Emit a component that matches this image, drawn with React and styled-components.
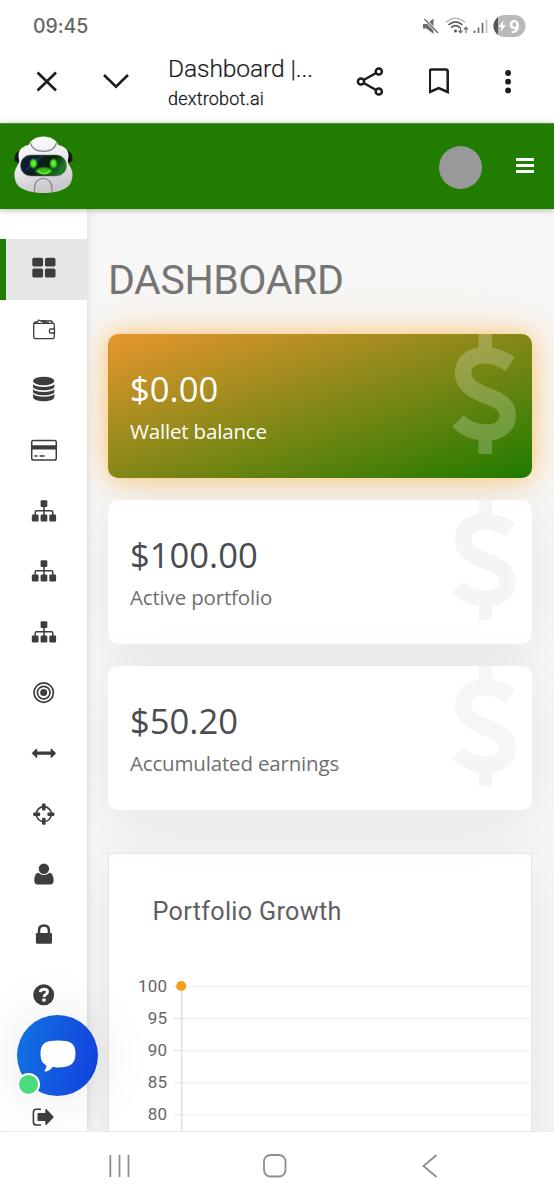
import React from 'react';
import styled, { createGlobalStyle, css } from 'styled-components';

const GlobalStyle = createGlobalStyle`
  * {
    box-sizing: border-box;
  }

  body {
    margin: 0;
    background: #fff;
    font-family: Roboto, sans-serif;
  }

  svg {
    display: block;
    flex-shrink: 0;
  }
`;

const Phone = styled.div`
  width: 554px;
  height: 1200px;
  display: flex;
  flex-direction: column;
  overflow: hidden;
  background: #fff;
`;

const StatusBar = styled.div`
  height: 52px;
  display: flex;
  align-items: center;
  justify-content: space-between;
  padding: 0 28px 0 33px;
`;

const Clock = styled.span`
  font: 500 19.5px Inter, sans-serif;
  letter-spacing: -0.1px;
  color: #666;
`;

const BrowserBar = styled.div`
  height: 71px;
  display: flex;
  align-items: center;
  padding: 0 42px 11px 30px;
`;

const PageInfo = styled.div`
  width: 187px;
  margin-left: 36px;
  padding-top: 1px;
  color: #1b1c1f;
`;

const PageTitle = styled.div`
  font-size: 24.6px;
  line-height: 32px;
  letter-spacing: -0.12px;
  font-weight: 300;
  -webkit-text-stroke: 0.2px #1b1c1f;
  white-space: nowrap;
`;

const PageUrl = styled.div`
  font-size: 18px;
  line-height: 28px;
  letter-spacing: 0.2px;
  font-weight: 300;
  -webkit-text-stroke: 0.3px #1b1c1f;
`;

const BrowserActions = styled.div`
  flex: 1;
  display: flex;
  align-items: center;
  justify-content: space-between;
`;

const Header = styled.header`
  height: 86px;
  flex-shrink: 0;
  display: flex;
  align-items: center;
  padding: 0 20px 0 12px;
  background: #217c02;
  border-top: 1px solid #4d9337;
  box-shadow: 0 1px 6px rgba(0, 0, 0, 0.3);
  position: relative;
  z-index: 3;
`;

const Avatar = styled.div`
  width: 43px;
  height: 43px;
  margin: 1px 34px 0 auto;
  border-radius: 50%;
  background: #999;
`;

const MenuButton = styled.div`
  width: 18px;
  margin: 0 0 2px;
  display: grid;
  gap: 3px;

  span {
    height: 3px;
    background: #fff;
  }
`;

const Body = styled.div`
  flex: 1;
  min-height: 0;
  display: flex;
  overflow: hidden;
  position: relative;
  background: #f7f7f7;
`;

const Sidebar = styled.nav`
  width: 87px;
  flex-shrink: 0;
  padding-top: 30px;
  background: #fff;
  box-shadow: 0 0 8px rgba(0, 0, 0, 0.13);
  position: relative;
  z-index: 2;
`;

const NavItem = styled.div`
  height: 60.6px;
  display: flex;
  align-items: center;
  padding-left: 28px;
  color: #3d3d3d;

  ${props => props.$active && css`
    padding-left: 22px;
    border-left: 6px solid #217c02;
    background: #e7e7e7;
  `}
`;

const Content = styled.main`
  flex: 1;
  min-width: 0;
  padding: 46px 22px 0 21px;
`;

const Heading = styled.h1`
  margin: 0 0 29px;
  font-size: 41px;
  line-height: 50px;
  font-weight: 400;
  letter-spacing: -0.4px;
  color: #757575;
`;

const Cards = styled.div`
  display: grid;
  gap: 22px;
`;

const Card = styled.section`
  height: 144px;
  display: flex;
  justify-content: space-between;
  padding-left: 22px;
  padding-right: 14px;
  border-radius: 10px;
  overflow: hidden;
  font-family: 'Open Sans', sans-serif;
  color: ${props => (props.$highlight ? '#fff' : '#4a4c50')};
  background: ${props => (props.$highlight ? 'linear-gradient(to bottom right, #e8962e, #207b00)' : '#fff')};
  box-shadow: ${props => (props.$highlight
    ? '0 0 22px rgba(255, 165, 30, 0.55), 0 0 60px rgba(255, 165, 40, 0.22)'
    : '0 10px 60px rgba(0, 0, 0, 0.075)')};
`;

const CardText = styled.div`
  padding-top: 31px;
`;

const Amount = styled.div`
  font-size: 34.6px;
  line-height: 48px;
`;

const Label = styled.div`
  font-size: 20.5px;
  line-height: 28px;
  margin-top: 4px;
  letter-spacing: -0.17px;
  color: ${props => (props.$highlight ? '#fff' : '#6f6f6f')};
`;

const ChartCard = styled.section`
  margin-top: 43px;
  height: 400px;
  padding-top: 40px;
  background: #fff;
  border: 1px solid #e6e6e6;
  box-shadow: 0 10px 60px rgba(0, 0, 0, 0.075);
`;

const ChartTitle = styled.h2`
  margin: 0 0 0 43.5px;
  font-size: 25.2px;
  line-height: 36px;
  font-weight: 400;
  letter-spacing: 0.3px;
  color: #5f6062;
`;

const ChatButton = styled.button`
  position: absolute;
  left: 17px;
  bottom: 35px;
  z-index: 4;
  width: 81px;
  height: 81px;
  padding: 0;
  border: 0;
  border-radius: 50%;
  display: grid;
  place-items: center;
  background: linear-gradient(100deg, #1273e2, #1340dd);
  box-shadow: 0 2px 60px rgba(0, 0, 0, 0.1);
`;

const OnlineDot = styled.span`
  position: absolute;
  left: 0;
  bottom: 0;
  width: 23px;
  height: 23px;
  border: 2.5px solid #fff;
  border-radius: 50%;
  background: #4bdc7d;
`;

const SystemNav = styled.footer`
  height: 69px;
  flex-shrink: 0;
  display: flex;
  align-items: center;
  justify-content: space-between;
  padding: 0 115px 0 107px;
  background: #fff;
  border-top: 1px solid #ececec;
`;

const NavIcon = ({ children }) => (
  <svg width="32" height="32" viewBox="0 0 32 32" fill="currentColor">{children}</svg>
);

const GridIcon = () => (
  <NavIcon>
    <rect x="4.3" y="4.8" width="10.8" height="8.6" rx="1.6" />
    <rect x="17" y="4.8" width="10.5" height="8.6" rx="1.6" />
    <rect x="4.3" y="15.6" width="10.8" height="9" rx="1.6" />
    <rect x="17" y="15.6" width="10.5" height="9" rx="1.6" />
  </NavIcon>
);

const WalletIcon = () => (
  <NavIcon>
    <g fill="none" stroke="currentColor" strokeWidth="1.3" strokeLinejoin="round">
      <path d="M26.300 15V10.500q0-1.200-1.200-1.200H7q-1.300 0-1.300 1.500V22.500q0 2.200 2.200 2.200H24.300q2 0 2-2V19" />
      <path d="M26.500 15h-4q-1 0-1 1v2q0 1 1 1h4z" />
      <path d="M5.800 10q.2-2.200 3-2.400M9 9l1.500-3 7 2.800M12.500 6.600l11 .4 1.500 2M16 7.500l5 1.500" />
    </g>
  </NavIcon>
);

const DatabaseIcon = () => (
  <NavIcon>
    <ellipse cx="15.700" cy="7" rx="10.700" ry="4.200" />
    <path d="M5 10.300q3 2.700 10.700 2.700t10.700-2.700v2.200c0 5-21.400 5-21.400 0z" />
    <path d="M5 15.200q3 2.700 10.700 2.700t10.700-2.700v2.200c0 5-21.400 5-21.400 0z" />
    <path d="M5 20.100q3 2.700 10.700 2.700t10.700-2.700v2.700c0 6-21.400 6-21.400 0z" />
  </NavIcon>
);

const CreditCardIcon = () => (
  <NavIcon>
    <rect x="3.700" y="5.500" width="24.600" height="19.500" rx="1.800" fill="none" stroke="currentColor" strokeWidth="1.500" />
    <path d="M3.500 10.300h25v4.300h-25zM6.300 20.300h3.200v1.500H6.300zM11.500 20.300h5.200v1.500h-5.200z" />
  </NavIcon>
);

const SitemapIcon = () => (
  <NavIcon>
    <rect x="12.600" y="4.200" width="6.700" height="6.800" rx="1.100" />
    <rect x="3.800" y="18.600" width="6.800" height="7" rx="1.100" />
    <rect x="12.600" y="18.600" width="6.700" height="7" rx="1.100" />
    <rect x="21.300" y="18.600" width="6.800" height="7" rx="1.100" />
    <path d="M7.200 19v-3q0-1.300 1.300-1.300h15q1.300 0 1.300 1.300v3M16 10.500V19" fill="none" stroke="currentColor" strokeWidth="1.500" />
  </NavIcon>
);

const TargetIcon = () => (
  <NavIcon>
    <circle cx="15.700" cy="15.600" r="3.500" />
    <circle cx="15.700" cy="15.600" r="6.300" fill="none" stroke="currentColor" strokeWidth="1.700" />
    <circle cx="15.700" cy="15.600" r="9.700" fill="none" stroke="currentColor" strokeWidth="1.700" />
  </NavIcon>
);

const ArrowsIcon = () => (
  <NavIcon>
    <path d="M3.700 15.200 8.200 10.700q.9-.3 1 .8v2.100h13.400v-2.100q.1-1.100 1-.8l4.500 4.500-4.500 4.500q-.9.300-1-.8v-2.100H9.200v2.100q-.1 1.100-1 .8z" />
  </NavIcon>
);

const CrosshairIcon = () => (
  <NavIcon>
    <circle cx="15.800" cy="15.200" r="7.500" fill="none" stroke="currentColor" strokeWidth="1.700" />
    <rect x="14" y="4.500" width="3.600" height="7" rx="1" />
    <rect x="14" y="18.800" width="3.600" height="7" rx="1" />
    <rect x="5.200" y="13.400" width="7" height="3.600" rx="1" />
    <rect x="19.400" y="13.400" width="7" height="3.600" rx="1" />
  </NavIcon>
);

const UserIcon = () => (
  <NavIcon>
    <circle cx="15.900" cy="9.700" r="5.200" />
    <path d="M10.500 13.800c3 3 7.800 3 10.800 0 3 .5 4.300 3.700 4.300 7.800q0 4-3.300 4H9.600q-3.300 0-3.300-4c0-4.100 1.200-7.300 4.200-7.800z" />
  </NavIcon>
);

const LockIcon = () => (
  <NavIcon>
    <rect x="7.900" y="13" width="16.100" height="10.700" rx="1.200" />
    <path d="M11 14v-3.500q0-5 4.950-5t4.950 5V14" fill="none" stroke="currentColor" strokeWidth="2.500" />
  </NavIcon>
);

const HelpIcon = () => (
  <NavIcon>
    <circle cx="15.700" cy="14.800" r="10.500" />
    <path d="M12 12q1-2.700 3.900-2.700 3.600 0 3.600 2.700c0 2.400-3.400 2-3.400 5" fill="none" stroke="#fff" strokeWidth="2.900" />
    <rect x="14.300" y="18.500" width="3.300" height="3" fill="#fff" />
  </NavIcon>
);

const SignOutIcon = () => (
  <NavIcon>
    <path d="M13 7.200H8.500q-3.100 0-3.100 3.100v9.600q0 3.100 3.100 3.100H13" fill="none" stroke="currentColor" strokeWidth="1.600" />
    <path d="M10.300 11h7V7.800q.2-1.300 1.300-.5l7.300 7.700-7.300 7.800q-1.100.8-1.300-.5V19h-7q-.8 0-.8-.8v-6.400q0-.8.800-.8z" />
  </NavIcon>
);

const RobotLogo = () => (
  <svg width="64" height="66" viewBox="0 0 64 66">
    <defs>
      <linearGradient id="shell" x1="0" y1="0" x2="0.300" y2="1">
        <stop offset="0" stopColor="#fff" />
        <stop offset="0.600" stopColor="#e9e9ec" />
        <stop offset="1" stopColor="#c9c9cd" />
      </linearGradient>
      <linearGradient id="visor" x1="0" y1="0" x2="1" y2="0.300">
        <stop offset="0" stopColor="#0a2a12" />
        <stop offset="0.250" stopColor="#101b38" />
        <stop offset="0.700" stopColor="#07210a" />
        <stop offset="1" stopColor="#1c7a20" />
      </linearGradient>
      <radialGradient id="glow">
        <stop offset="0" stopColor="#6cff3d" />
        <stop offset="0.550" stopColor="#45d820" />
        <stop offset="1" stopColor="#1b7a12" stopOpacity="0" />
      </radialGradient>
    </defs>
    <path d="M2.500 27q-.5-9 6-11v14zM60.500 27q.5-9-6-11v14z" fill="#15151a" />
    <path d="M31.500 2.500C39 2.500 44 6 46.500 11c5.500 1 9.500 4.500 10 9.500.3 3-1 5.500-.5 8 1.500 3.500 4 6 4.500 11 .3 8-3 12.500-7 14.800-5 3.200-14 4.700-22 4.700S14.500 57.500 9.500 54.300c-4-2.300-7.300-6.800-7-14.800.5-5 3-7.500 4.500-11 .5-2.500-.8-5-.5-8 .5-5 4.500-8.500 10-9.500 2.500-5 7.500-8.500 15-8.500z" fill="url(#shell)" />
    <path d="M18.500 9C20 15 25 17.300 31.500 17.300S43 15 44.500 9M22.500 58.500v-4c0-13.500 17.500-13.500 17.500 0v4" fill="none" stroke="#86868b" strokeWidth="1.200" />
    <rect x="8.500" y="21" width="46" height="21" rx="10" fill="url(#visor)" stroke="#777" strokeWidth="0.600" />
    <path d="M14 36 30 22M42 41 51 28" stroke="#245068" strokeWidth="2" opacity="0.500" />
    <ellipse cx="32" cy="37" rx="11" ry="5" fill="url(#glow)" opacity="0.700" />
    <ellipse cx="21.500" cy="29.500" rx="4.700" ry="6" fill="url(#glow)" />
    <ellipse cx="41.500" cy="29.500" rx="4.700" ry="6" fill="url(#glow)" />
    <path d="M25.500 36.500q6.500 6 13 0" fill="none" stroke="#54e52c" strokeWidth="1.800" />
  </svg>
);

const DollarMark = ({ highlight }) => (
  <svg width="73" height="121" viewBox="0 0 73 121">
    <g opacity={highlight ? 0.22 : 0.035} fill={highlight ? '#fff' : '#000'} stroke="none">
      <path
        d="M65.300 30C57 24.500 49 21.200 40 21.200C27 21.200 18 28.500 18 39C18 50 27 56 40 61C54 66 62.700 71 62.700 81.500C62.700 92 54 98.500 41 98.500C29 98.500 20 94 13 87"
        fill="none"
        stroke={highlight ? '#fff' : '#000'}
        strokeWidth="16.500"
      />
      <rect x="33.500" y="-4" width="13.500" height="20" />
      <rect x="33.500" y="103" width="13.500" height="17" rx="1" />
    </g>
  </svg>
);

const StatusIcons = () => (
  <svg width="104" height="24" viewBox="422 14 104 24">
    <path d="M423 24h3.500l7-5.500V34l-7-5.500H423z" fill="#6d6d6d" />
    <path d="M424 18.500 438 33" stroke="#fff" strokeWidth="3" />
    <path d="M424.500 19 438 33" stroke="#6d6d6d" strokeWidth="1.400" />
    <g fill="none" strokeWidth="1.600">
      <path d="M446 22.500q9.500-8.500 19 0" stroke="#bbb" />
      <path d="M448.500 24.800q7-6 14 0M451 27.700q4.500-4 9 0" stroke="#606060" />
      <path d="M460.500 27v5.500m-2-2 2 2.300 2-2.300M466 33v-5.500m-2 2 2-2.300 2 2.300" stroke="#707070" strokeWidth="1.200" />
    </g>
    <circle cx="455.500" cy="31" r="1.500" fill="#555" />
    <path d="M474.500 33v-2.500M478.500 33v-5.500M482.500 33V23" stroke="#6c6c6c" strokeWidth="1.700" />
    <path d="M486.500 33V19.500" stroke="#c4c4c4" strokeWidth="1.700" />
    <clipPath id="battery"><rect x="493.500" y="15" width="32" height="22" rx="11" /></clipPath>
    <g clipPath="url(#battery)">
      <rect x="493" y="15" width="33" height="22" fill="#b9b9b9" />
      <rect x="493" y="15" width="5" height="22" fill="#555" />
    </g>
    <path d="M503.500 20 498.500 27h3l-1 5 5.500-7h-3.200z" fill="#fff" />
    <text x="509" y="32.700" fontFamily="Roboto, sans-serif" fontSize="18.500" fontWeight="700" fill="#fff">9</text>
  </svg>
);

const TabIcons = () => (
  <svg width="102" height="30" viewBox="30 67 102 30" fill="none" stroke="#1b1c1f" strokeWidth="2.600">
    <path d="M37.500 72.500 56 90.500M56 72.500 37.500 90.500M104 75l12 11.700L128 75" />
  </svg>
);

const ShareIcon = () => (
  <svg width="30" height="32" viewBox="355 66 30 32" fill="none" stroke="#1b1c1f" strokeWidth="2.500">
    <circle cx="361" cy="81.500" r="3.100" />
    <circle cx="378.800" cy="71.500" r="3.100" />
    <circle cx="378.800" cy="91.500" r="3.100" />
    <path d="m363.700 80 12.400-7M363.700 83l12.400 7" />
  </svg>
);

const BookmarkIcon = () => (
  <svg width="32" height="30" viewBox="429 67 32 30" fill="none" stroke="#1b1c1f" strokeWidth="2.500">
    <path d="M429.800 92V71.500q0-2 2-2h13.900q2 0 2 2V92l-9-4z" />
  </svg>
);

const MoreIcon = () => (
  <svg width="8" height="30" viewBox="503.500 67 8 30" fill="#1b1c1f">
    <circle cx="507.600" cy="73" r="2.900" />
    <circle cx="507.600" cy="81.700" r="2.900" />
    <circle cx="507.600" cy="90.400" r="2.900" />
  </svg>
);

const ticks = [100, 95, 90, 85, 80];

const GrowthChart = () => (
  <svg width="422" height="240" viewBox="109 930 422 240">
    {ticks.map((tick, i) => (
      <g key={tick}>
        <path d={`M181 ${986.5 + i * 32.1}H531`} stroke="#efefef" />
        <path d={`M174 ${986.5 + i * 32.1}H182`} stroke="#dedede" />
        <text x="167.300" y={991.5 + i * 32} textAnchor="end" fontSize="17" letterSpacing="0.250" fill="#666">{tick}</text>
      </g>
    ))}
    <path d="M181.800 986v184" stroke="#dcdcdc" strokeWidth="1.300" />
    <circle cx="181.200" cy="986" r="5.100" fill="#f0a11a" />
  </svg>
);

const menu = [
  GridIcon, WalletIcon, DatabaseIcon, CreditCardIcon, SitemapIcon, SitemapIcon, SitemapIcon,
  TargetIcon, ArrowsIcon, CrosshairIcon, UserIcon, LockIcon, HelpIcon, NavIcon, SignOutIcon,
];

const stats = [
  { amount: '$0.00', label: 'Wallet balance', highlight: true },
  { amount: '$100.00', label: 'Active portfolio' },
  { amount: '$50.20', label: 'Accumulated earnings' },
];

const StatCard = ({ amount, label, highlight }) => (
  <Card $highlight={highlight}>
    <CardText>
      <Amount>{amount}</Amount>
      <Label $highlight={highlight}>{label}</Label>
    </CardText>
    <DollarMark highlight={highlight} />
  </Card>
);

const App = () => {
  return (
    <Phone>
      <GlobalStyle />
      <StatusBar>
        <Clock>09:45</Clock>
        <StatusIcons />
      </StatusBar>
      <BrowserBar>
        <TabIcons />
        <PageInfo>
          <PageTitle>Dashboard |...</PageTitle>
          <PageUrl>dextrobot.ai</PageUrl>
        </PageInfo>
        <BrowserActions>
          <ShareIcon />
          <BookmarkIcon />
          <MoreIcon />
        </BrowserActions>
      </BrowserBar>
      <Header>
        <RobotLogo />
        <Avatar />
        <MenuButton><span /><span /><span /></MenuButton>
      </Header>
      <Body>
        <Sidebar>
          {menu.map((Icon, i) => (
            <NavItem key={i} $active={i === 0}><Icon /></NavItem>
          ))}
        </Sidebar>
        <Content>
          <Heading>DASHBOARD</Heading>
          <Cards>
            {stats.map(stat => <StatCard key={stat.label} {...stat} />)}
          </Cards>
          <ChartCard>
            <ChartTitle>Portfolio Growth</ChartTitle>
            <GrowthChart />
          </ChartCard>
        </Content>
        <ChatButton>
          <svg width="36" height="34" viewBox="0 0 36 34" fill="#fff">
            <path d="M18 1.500C30 1.500 35.500 4 35.500 14.500S30 28.500 18 28.500c-2 0-4 0-5.500-.4-1.500 2.400-4 4-6.800 4.500-1.500.1-1.400-1-.5-2.200 1-1.200 1.300-2.600 1.200-4C2 24 .5 20.500.5 14.500.5 4 6 1.500 18 1.500z" />
          </svg>
          <OnlineDot />
        </ChatButton>
      </Body>
      <SystemNav>
        <svg width="25" height="24" viewBox="0 0 25 24" stroke="#8d8d8d" strokeWidth="1.800">
          <path d="M3.300 1v22M12.500 1v22M21.500 1v22" />
        </svg>
        <svg width="30" height="26" viewBox="0 0 30 26" fill="none" stroke="#8d8d8d" strokeWidth="1.800">
          <rect x="2" y="2" width="21.500" height="21.500" rx="6.500" />
        </svg>
        <svg width="18" height="26" viewBox="0 0 18 26" fill="none" stroke="#8d8d8d" strokeWidth="1.800">
          <path d="M15.500 2 2.500 13l13 11" />
        </svg>
      </SystemNav>
    </Phone>
  );
};

export default App;
